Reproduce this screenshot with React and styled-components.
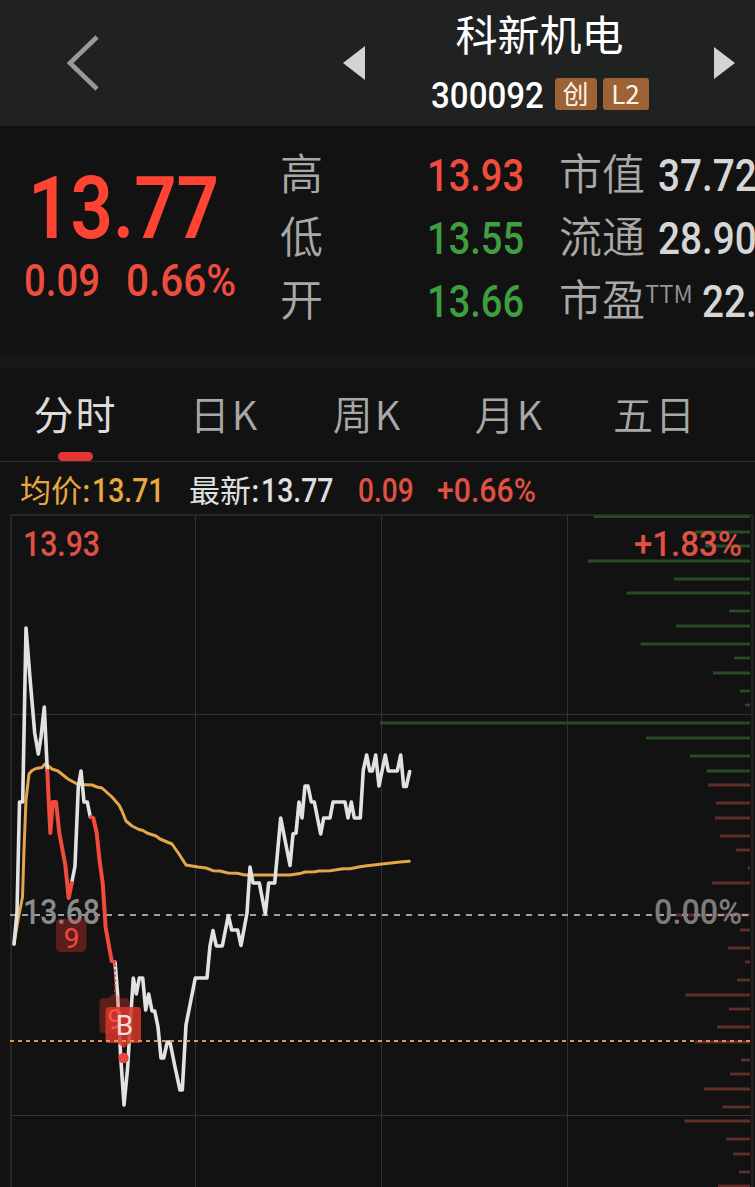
import styled, { createGlobalStyle } from "styled-components";

const highLow = [
  { label: "高", value: "13.93", color: "#ee4d3e" },
  { label: "低", value: "13.55", color: "#3f9e3f" },
  { label: "开", value: "13.66", color: "#3f9e3f" },
];

const figures = [
  { label: "市值", value: "37.72" },
  { label: "流通", value: "28.90" },
  { label: "市盈", sup: "TTM", value: "22." },
];

const tabs = [
  { name: "分时", width: 151, active: true },
  { name: "日K", width: 147 },
  { name: "周K", width: 139 },
  { name: "月K", width: 145 },
  { name: "五日", width: 146 },
];

// price line, split where the nine-turn signal colours it red
const priceStart =
  "14,944 17,912 19.5,802 22.7,802 26,628 30,678 34.7,733 38.3,754 41,737 44.3,707 47.3,771";
const signalOne =
  "47.3,771 50.3,833 52.7,802 56,802 59.3,833 65.3,865 68.7,898 71.7,883";
const priceMiddle = "71.7,883 75,866 78.3,787 81,771 84,802 87.3,802 90.3,817";
const signalTwo =
  "91,817 93.3,818 96.7,833 99.5,860 102.7,883 105.7,928 111.7,961 114,962";
const priceEnd =
  "115,962 117.5,993 120.7,1057 124,1105 127.7,1067 130,1027 133.3,978 136.3,994 139.3,978 142.7,978 " +
  "145.7,1010 148.7,994 152,1011 154.7,1011 158,1027 161,1058 163.7,1058 167.3,1042 170,1042 175,1067 " +
  "180,1090 182.3,1090 186,1025 195.3,978 207,978 210,946 213,930.5 216.3,946 222.3,946 228.3,915.5 " +
  "231.7,930 237.7,930 241,945.5 247,913 250,867 253,883 259.3,883 265.3,914 268.7,883 274.7,883 " +
  "280.7,818 290,865.5 293,834 296,833 299,802 302,818 305,786 308,786 311.3,802 314.3,802 320.7,834 " +
  "323.7,818 330,818 333,802 345,802 348,818 351.3,802 354.3,818 360.3,818 363.3,770 366.7,755 " +
  "369.7,771 372.3,771 375.7,755 379,786 385.3,755 388.3,771 397.3,771 400.7,755 403.7,786.5 " +
  "406.3,786.5 409.7,771.5";

const average =
  "14,944 18,920 22.5,897 24,850 26,800 29,774 32,770.5 36,768.5 42,767.5 45,764 47,765 52,769 58,771 " +
  "68,779 78,784.5 92,785 97,787 102,788 112,797 119,805 122,811 126,821 132,826 139,829.5 143,830.5 " +
  "147,833 156,836 160,839 172,844 179,854 186,865 198,867 206,868 213,870.7 220,871 228,873 237,873.3 " +
  "245,875 290,875 300,873.6 305,872 315,871.7 319,870.9 330,870.7 343,868.7 350,868.7 360,866.7 " +
  "367,865.8 380,864.3 400,862 409.3,861.3";

// [y, x] of every volume bar, all of them end at the right border
const sellBars = [
  [516.7, 594], [532, 695], [546, 705], [561, 587.7], [579, 674], [593, 626.5],
  [611, 729], [626, 676], [644, 640.5], [658, 734], [673, 713], [691, 740],
  [705, 745], [723, 380], [738, 646], [756, 690], [771, 706.7],
];

const buyBars = [
  [785, 708], [803, 716], [818, 715], [836, 720], [850, 736], [868, 748],
  [883, 712], [915, 675], [930, 740], [948, 728], [962, 745], [980, 737],
  [995, 685.5], [1009, 729], [1027, 717], [1042, 695], [1060, 741], [1074, 730],
  [1089, 704], [1107, 722.5], [1121, 684.5], [1139, 726], [1154, 733],
  [1172, 739], [1186, 718],
];

const App = () => {
  return (
    <Page>
      <GlobalStyle />
      <Header>
        <BackButton aria-label="back">
          <svg width="34" height="58" viewBox="0 0 34 58">
            <path d="M31 3L4 29l27 26" fill="none" stroke="#989998" strokeWidth="4.6" />
          </svg>
        </BackButton>
        <PrevArrow />
        <Title>
          <StockName>科新机电</StockName>
          <CodeRow>
            <Num $size={37} $scale={0.895} $width={118} $drop={4} $color="#fff">300092</Num>
            <Badge $width={42}>创</Badge>
            <Badge $width={46}>L2</Badge>
          </CodeRow>
        </Title>
        <NextArrow />
      </Header>

      <Quote>
        <PriceBox>
          <Price>
            <Num $size={87} $scale={0.855} $width={190} $line={78} $color="#ff4433" $weight={600}>
              13.77
            </Num>
          </Price>
          <ChangeRow>
            <Num $size={44} $scale={0.87} $width={102} $color="#ee4d3e">0.09</Num>
            <Num $size={44} $scale={0.92} $width={112} $color="#ee4d3e">0.66%</Num>
          </ChangeRow>
        </PriceBox>
        <HighLow>
          {highLow.map((item) => (
            <Row key={item.label}>
              <Label>{item.label}</Label>
              <Num $size={44} $scale={0.865} $width={99} $drop={2} $color={item.color}>
                {item.value}
              </Num>
            </Row>
          ))}
        </HighLow>
        <Figures>
          {figures.map((item) => (
            <Row key={item.label}>
              <Label>{item.label}</Label>
              {item.sup && <Sup>{item.sup}</Sup>}
              <Figure $tight={item.sup}>
                <Num $size={44} $scale={0.88} $width={110} $drop={2} $color="#d6d6d6">
                  {item.value}
                </Num>
              </Figure>
            </Row>
          ))}
        </Figures>
      </Quote>

      <Divider />

      <Tabs>
        {tabs.map((tab) => (
          <Tab key={tab.name} $width={tab.width} $active={tab.active}>
            {tab.name}
          </Tab>
        ))}
      </Tabs>

      <Info>
        <InfoText $color="#e9a83e">均价:</InfoText>
        <Num $size={33} $scale={0.86} $width={97} $color="#e9a83e">13.71</Num>
        <InfoText $color="#e0e0e0">最新:</InfoText>
        <Num $size={33} $scale={0.86} $width={97} $color="#e0e0e0">13.77</Num>
        <Num $size={33} $scale={0.85} $width={79} $color="#e05143">0.09</Num>
        <Num $size={33} $scale={0.915} $width={110} $color="#e05143">+0.66%</Num>
      </Info>

      <Chart viewBox="0 514 755 673">
        <g stroke="#323232" strokeWidth="1">
          <path d="M195.5 514V1187M381.5 514V1187M567.5 514V1187" />
          <path d="M10 714.5H753M10 1115.5H753" />
        </g>
        <path d="M11 514V1187M10 515H753" stroke="#262626" strokeWidth="2" />
        <path d="M752.5 514V1187" stroke="#222" strokeWidth="3" />

        {sellBars.map(([y, x]) => (
          <path key={y} d={`M${x} ${y}H750`} stroke="#274a27" strokeWidth="2.8" />
        ))}
        {buyBars.map(([y, x]) => (
          <path key={y} d={`M${x} ${y}H750`} stroke="#602d2a" strokeWidth="2.8" />
        ))}

        <path d="M10 915H750" stroke="#a0a0a0" strokeWidth="2" strokeDasharray="6 6" />

        <Line points={average} $color="#e5a54a" $size={3} />
        <Line points={priceStart} $color="#e2e2e2" $size={3.6} />
        <Line points={priceMiddle} $color="#e2e2e2" $size={3.6} />
        <Line points={priceEnd} $color="#e2e2e2" $size={3.6} />
        <Line points={signalOne} $color="#f24a3c" $size={4} />
        <Line points={signalTwo} $color="#f24a3c" $size={4} />

        <ChartText x="23" y="556" textLength="77" $color="#e05143">13.93</ChartText>
        <ChartText x="634" y="556" textLength="108" $color="#e05143">+1.83%</ChartText>
        <ChartText x="23" y="924" textLength="77" $color="#8c8c8c">13.68</ChartText>
        <ChartText x="654" y="924" textLength="88" $color="#7c7c7c">0.00%</ChartText>

        <rect x="56" y="919" width="30.5" height="33" rx="4.5" fill="#ee3b2f" fillOpacity="0.33" />
        <MarkText x="71.7" y="947.5" $color="#f5483a">9</MarkText>

        <path d="M115 964V992" stroke="#d04a40" strokeWidth="1.5" strokeDasharray="3 2" />
        <path
          d="M104 998h4.5l6 -5 6 5h4.5q4 0 4 4v27q0 4-4 4h-21q-4.500 0-4.500-4v-27q0-4 4.500-4z"
          fill="#ee3b2f"
          fillOpacity="0.33"
        />
        <path
          d="M109 1007h29q3 0 3 3v30q0 3-3 3h-8l-6 5-7-5h-8q-3.500 0-3.500-3v-30q0-3 3.500-3z"
          fill="#d5362b"
          fillOpacity="0.86"
        />
        <MarkText x="115" y="1028.500" $color="#ff5041">9</MarkText>
        <MarkText x="124.500" y="1034.500" $color="#f4dedc">B</MarkText>
        <circle cx="123.500" cy="1058" r="5.200" fill="#e8473b" />

        <path d="M10 1041H750" stroke="#de9457" strokeWidth="2" strokeDasharray="4 4" />
      </Chart>
    </Page>
  );
};

const cjk = `"Noto Sans CJK SC", sans-serif`;
const din = `Roboto, "Noto Sans CJK SC", sans-serif`;

const GlobalStyle = createGlobalStyle`
  * {
    box-sizing: border-box;
  }

  body {
    margin: 0;
    background: #121212;
    overflow: hidden;
  }
`;

const Page = styled.main`
  width: 755px;
  height: 1187px;
  overflow: hidden;
  display: flex;
  flex-direction: column;
  background: #121212;
  font-family: ${cjk};
`;

const Num = styled.span`
  flex: none;
  display: block;
  width: ${(props) => props.$width}px;
  padding-top: ${(props) => props.$drop || 0}px;
  font-family: ${din};
  font-size: ${(props) => props.$size}px;
  font-weight: ${(props) => props.$weight || 500};
  line-height: ${(props) => props.$line || 44}px;
  color: ${(props) => props.$color};
  white-space: nowrap;
  transform: scaleX(${(props) => props.$scale});
  transform-origin: left center;
`;

const Header = styled.header`
  flex: none;
  height: 126px;
  display: grid;
  grid-template-columns: 66px 277px 22px 349px 21px;
  align-items: center;
  background: #202221;
`;

const BackButton = styled.button`
  grid-column: 2;
  justify-self: start;
  display: flex;
  padding: 0;
  border: none;
  background: none;
  cursor: pointer;
`;

const PrevArrow = styled.i`
  border: solid transparent;
  border-width: 17.5px 22px 17.5px 0;
  border-right-color: #d3d3d3;
`;

const NextArrow = styled.i`
  border: solid transparent;
  border-width: 16.5px 0 16.5px 21px;
  border-left-color: #d3d3d3;
`;

const Title = styled.div`
  height: 126px;
  padding-top: 7px;
  display: flex;
  flex-direction: column;
  align-items: center;
`;

const StockName = styled.h1`
  margin: 0;
  font-size: 42px;
  font-weight: 400;
  line-height: 52px;
  color: #fff;
`;

const CodeRow = styled.div`
  display: flex;
  align-items: center;
  gap: 6px;
  margin-top: 11px;
`;

const Badge = styled.span`
  width: ${(props) => props.$width}px;
  height: 32px;
  border-radius: 3px;
  background: #9d6235;
  color: #fff3e4;
  font-size: 26px;
  line-height: 30px;
  text-align: center;
`;

const Quote = styled.section`
  flex: none;
  height: 230px;
  padding-top: 17px;
  display: grid;
  grid-template-columns: 280px 279px 196px;
`;

const PriceBox = styled.div`
  padding: 26px 0 0 24px;
`;

const Price = styled.div`
  padding-left: 4px;
`;

const ChangeRow = styled.div`
  display: flex;
  margin-top: 12px;
`;

const HighLow = styled.div`
  padding-right: 33px;
`;

const Figures = styled.div`
  overflow: hidden;
`;

const Row = styled.div`
  display: flex;
  align-items: center;
  justify-content: space-between;
  height: 63.3px;
`;

const Label = styled.span`
  flex: none;
  padding-bottom: 8px;
  font-size: 43px;
  font-weight: 350;
  line-height: 56px;
  color: #a8a8a8;
`;

const Sup = styled.sup`
  flex: none;
  padding-bottom: 17px;
  font-family: ${cjk};
  font-size: 24px;
  font-weight: 350;
  line-height: 24px;
  color: #969696;
`;

const Figure = styled.div`
  flex: 1;
  min-width: 0;
  padding-left: ${(props) => (props.$tight ? 9 : 13)}px;
`;

const Divider = styled.div`
  flex: none;
  height: 12px;
  background: #171717;
`;

const Tabs = styled.nav`
  flex: none;
  display: flex;
  height: 94px;
  border-bottom: 1px solid #303030;
`;

const Tab = styled.button`
  width: ${(props) => props.$width}px;
  padding: 18px 0 0;
  border: none;
  background: none;
  color: ${(props) => (props.$active ? "#dcdcdc" : "#a8a8a8")};
  font-family: ${cjk};
  font-size: 40px;
  font-weight: ${(props) => (props.$active ? 400 : 350)};
  line-height: 54px;
  letter-spacing: 2px;
  display: flex;
  flex-direction: column;
  align-items: center;
  white-space: nowrap;

  &:after {
    content: "";
    width: 35px;
    height: 9px;
    margin-top: 12px;
    border-radius: 5px;
    background: ${(props) => (props.$active ? "#e53434" : "transparent")};
  }
`;

const Info = styled.div`
  flex: none;
  display: flex;
  align-items: center;
  height: 52px;
  padding: 5px 0 0 20px;
`;

const InfoText = styled.span`
  width: 72px;
  flex: none;
  padding-bottom: 4px;
  color: ${(props) => props.$color};
  font-size: 31px;
  line-height: 40px;
`;

const Chart = styled.svg`
  flex: none;
  display: block;
  width: 755px;
  height: 673px;
`;

const Line = styled.polyline`
  fill: none;
  stroke: ${(props) => props.$color};
  stroke-width: ${(props) => props.$size}px;
  stroke-linejoin: round;
  stroke-linecap: round;
`;

const ChartText = styled.text.attrs({ lengthAdjust: "spacingAndGlyphs" })`
  fill: ${(props) => props.$color};
  font-family: ${din};
  font-size: 34.5px;
  font-weight: 500;
`;

const MarkText = styled.text`
  fill: ${(props) => props.$color};
  font-family: ${din};
  font-size: 28px;
  text-anchor: middle;
`;

export default App;
